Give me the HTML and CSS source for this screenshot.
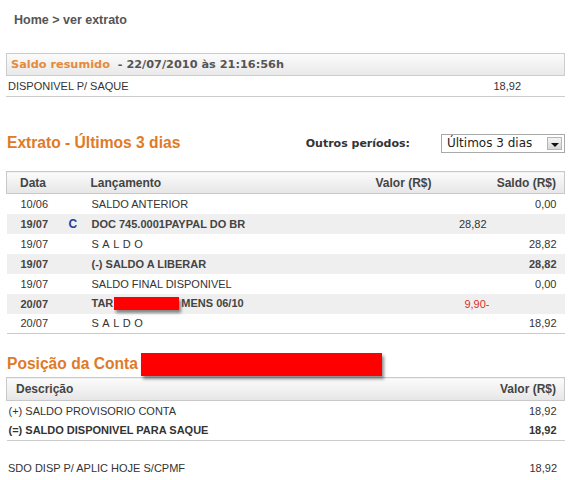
FILE: index.html
```html
<!DOCTYPE html>
<html lang="pt-BR">
<head>
  <meta charset="UTF-8">
  <title>Ver extrato</title>
  <link rel="stylesheet" href="styles.css">
</head>
<body>
  <div class="pagina">
    <!-- Trilha de navegação -->
    <div class="trilha">Home &gt; ver extrato</div>

    <div class="resumo">
      <div class="resumo-topo">
        <span class="laranja">Saldo resumido</span>&nbsp; - 22/07/2010 às 21:16:56h
      </div>
      <div class="resumo-linha">
        <span>DISPONIVEL P/ SAQUE</span>
        <span>18,92</span>
      </div>
    </div>

    <div class="titulo-extrato">
      <h1>Extrato - Últimos 3 dias</h1>
      <div class="periodos">
        <span class="periodos-label">Outros períodos:</span>
        <div class="combo">
          <span>Últimos 3 dias</span>
          <span class="combo-seta"></span>
        </div>
      </div>
    </div>

    <table class="extrato">
      <thead>
        <tr>
          <th class="col-data">Data</th>
          <th class="col-tipo"></th>
          <th class="col-lanc">Lançamento</th>
          <th class="col-valor">Valor (R$)</th>
          <th class="col-saldo">Saldo (R$)</th>
        </tr>
      </thead>
      <tbody>
        <tr>
          <td class="col-data">10/06</td>
          <td></td>
          <td>SALDO ANTERIOR</td>
          <td class="col-valor"></td>
          <td class="col-saldo">0,00</td>
        </tr>
        <tr class="par">
          <td class="col-data">19/07</td>
          <td class="tipo-c">C</td>
          <td>DOC 745.0001PAYPAL DO BR</td>
          <td class="col-valor">28,82</td>
          <td class="col-saldo"></td>
        </tr>
        <tr>
          <td class="col-data">19/07</td>
          <td></td>
          <td class="espacado">SALDO</td>
          <td class="col-valor"></td>
          <td class="col-saldo">28,82</td>
        </tr>
        <tr class="par">
          <td class="col-data">19/07</td>
          <td></td>
          <td>(-) SALDO A LIBERAR</td>
          <td class="col-valor"></td>
          <td class="col-saldo">28,82</td>
        </tr>
        <tr>
          <td class="col-data">19/07</td>
          <td></td>
          <td>SALDO FINAL DISPONIVEL</td>
          <td class="col-valor"></td>
          <td class="col-saldo">0,00</td>
        </tr>
        <tr class="par">
          <td class="col-data">20/07</td>
          <td></td>
          <td>TAR<span class="tarja tarja-linha"></span>MENS 06/10</td>
          <td class="col-valor debito">9,90-</td>
          <td class="col-saldo"></td>
        </tr>
        <tr>
          <td class="col-data">20/07</td>
          <td></td>
          <td class="espacado">SALDO</td>
          <td class="col-valor"></td>
          <td class="col-saldo">18,92</td>
        </tr>
      </tbody>
    </table>

    <h2 class="titulo-posicao">Posição da Conta<span class="tarja tarja-titulo"></span></h2>

    <table class="posicao">
      <thead>
        <tr>
          <th class="desc">Descrição</th>
          <th class="valor">Valor (R$)</th>
        </tr>
      </thead>
      <tbody>
        <tr>
          <td class="desc">(+) SALDO PROVISORIO CONTA</td>
          <td class="valor">18,92</td>
        </tr>
        <tr class="total">
          <td class="desc">(=) SALDO DISPONIVEL PARA SAQUE</td>
          <td class="valor">18,92</td>
        </tr>
      </tbody>
    </table>

    <div class="aplicacao">
      <span>SDO DISP P/ APLIC HOJE S/CPMF</span>
      <span>18,92</span>
    </div>
  </div>
</body>
</html>
```

FILE: styles.css
```css
* {
  box-sizing: border-box;
  margin: 0;
  padding: 0;
}

body {
  background: #fff;
  font-family: 'Liberation Sans', Arial, sans-serif;
  font-size: 11px;
  color: #333;
}

.pagina {
  width: 559px;
  margin-left: 6px;
}

.laranja {
  color: #e58a3c;
}

.trilha {
  margin-top: 12px;
  padding-left: 8px;
  line-height: 16px;
  font-size: 12.5px;
  font-weight: bold;
  color: #555;
}

/* caixa do saldo resumido */
.resumo {
  margin-top: 25px;
  border-bottom: 1px solid #ccc;
}

.resumo-topo {
  height: 23px;
  line-height: 21px;
  padding-left: 4px;
  border: 1px solid #ccc;
  background: linear-gradient(#fbfbfb, #e9e9e9);
  font-family: 'DejaVu Sans', Verdana, sans-serif;
  font-size: 11.3px;
  font-weight: bold;
  color: #555;
}

.resumo-linha {
  display: flex;
  justify-content: space-between;
  height: 20px;
  line-height: 20px;
  padding: 0 44px 0 2px;
}

/* titulo do extrato + combo de periodo */
.titulo-extrato {
  display: flex;
  align-items: center;
  justify-content: space-between;
  height: 20px;
  margin-top: 36px;
}

h1, h2 {
  font-size: 15.6px;
  font-weight: bold;
  color: #e07a27;
}

h1 {
  padding-left: 1px;
}

.periodos {
  display: flex;
  align-items: center;
  gap: 31px;
  font-family: 'DejaVu Sans', Verdana, sans-serif;
  font-size: 11px;
}

.periodos-label {
  font-weight: bold;
  color: #333;
}

.combo {
  display: flex;
  align-items: center;
  justify-content: space-between;
  width: 124px;
  height: 19px;
  padding: 0 2px 0 5px;
  border: 1px solid #a9a9a9;
  background: #fff;
  font-size: 12px;
  color: #222;
}

.combo-seta {
  position: relative;
  width: 15px;
  height: 13px;
  border: 1px solid #b5b5b5;
  background: linear-gradient(#f4f4f4, #d6d6d6);
}

.combo-seta::after {
  content: '';
  position: absolute;
  left: 3px;
  top: 5px;
  border-left: 4px solid transparent;
  border-right: 4px solid transparent;
  border-top: 4px solid #111;
}

/* tabelas */
table {
  width: 100%;
  border-collapse: collapse;
}

th {
  height: 22px;
  font-size: 12px;
  font-weight: bold;
  color: #444;
  text-align: left;
  background: linear-gradient(#fbfbfb, #e6e6e6);
  border-top: 1px solid #c9c9c9;
  border-bottom: 1px solid #c9c9c9;
}

th:first-child {
  border-left: 1px solid #c9c9c9;
}

th:last-child {
  border-right: 1px solid #c9c9c9;
}

.extrato {
  margin-top: 18px;
  border-bottom: 1px solid #ccc;
}

.extrato td {
  height: 20px;
  white-space: nowrap;
}

/* linhas sombreadas vêm em negrito, menos a coluna de valor */
.extrato tr.par td {
  background: #efefef;
  font-weight: bold;
  color: #444;
}

.extrato tr.par td.col-valor {
  font-weight: normal;
  color: #333;
}

.col-data {
  width: 62px;
  padding-left: 13px;
}

td.col-data {
  padding-left: 14px;
}

.col-tipo {
  width: 20px;
}

.col-lanc {
  padding-left: 2px;
}

.extrato td:nth-child(3) {
  padding-left: 3px;
}

.col-valor {
  width: 160px;
  text-align: right;
  padding-right: 3px;
}

th.col-valor {
  padding-right: 58px;
}

.col-saldo {
  width: 75px;
  text-align: right;
  padding-right: 8px;
}

.extrato tr.par td.tipo-c {
  color: #1d3f9a;
  font-size: 12px;
}

.espacado {
  letter-spacing: 3.5px;
}

.extrato tr.par td.debito {
  color: #d8302d;
  padding-right: 0;
}

/* tarjas vermelhas que escondem dados */
.tarja {
  display: inline-block;
  background: #fe0000;
  box-shadow: 2px 3px 3px rgba(0, 0, 0, 0.45);
  vertical-align: middle;
}

.tarja-linha {
  width: 65px;
  height: 13px;
  margin: 0 2px 0 1px;
}

.tarja-titulo {
  width: 241px;
  height: 23px;
  margin-left: 3px;
}

.titulo-posicao {
  display: flex;
  align-items: center;
  height: 26px;
  margin-top: 17px;
  padding-left: 1px;
}

.posicao {
  border-bottom: 1px solid #ccc;
}

.posicao th {
  height: 23px;
}

.posicao td {
  height: 20px;
}

th.desc {
  padding-left: 9px;
}

td.desc {
  padding-left: 2px;
}

.posicao .valor {
  text-align: right;
  padding-right: 8px;
}

.posicao .total td {
  font-weight: bold;
}

.aplicacao {
  display: flex;
  justify-content: space-between;
  height: 20px;
  line-height: 20px;
  margin-top: 17px;
  padding: 0 8px 0 2px;
}
```
